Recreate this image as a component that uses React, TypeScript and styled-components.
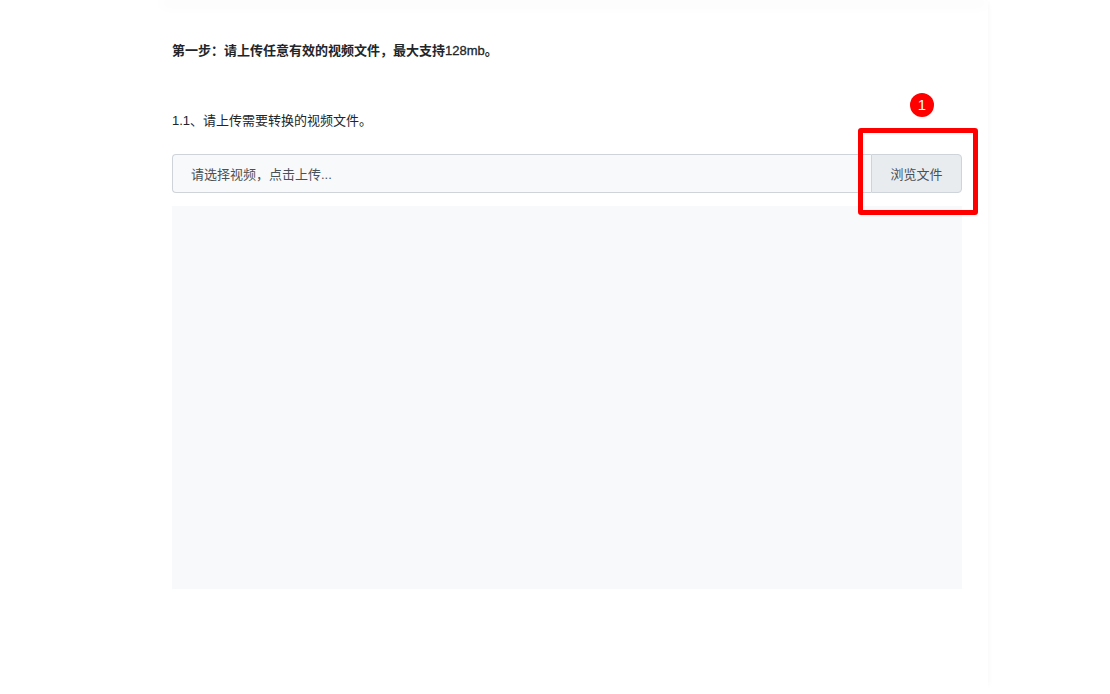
import React from 'react';
import styled, { createGlobalStyle } from 'styled-components';

const GlobalStyle = createGlobalStyle`
  html, body {
    margin: 0;
    padding: 0;
    background: #ffffff;
    font-family: "Liberation Sans", "Noto Sans CJK SC", sans-serif;
    color: #212529;
  }
`;

const Page = styled.div`
  width: 840px;
  margin-left: 148px;
  min-height: 694px;
  position: relative;
  box-shadow: 6px 0 6px -6px rgba(0, 0, 0, 0.04);
`;

const HeaderEdge = styled.div`
  height: 2px;
  margin-left: 12px;
  margin-top: -2px;
  background: #fff;
  box-shadow: 0 4px 14px rgba(0, 0, 0, 0.09);
`;

const Content = styled.div`
  padding: 42px 26px 0 24px;
`;

const StepTitle = styled.div`
  font-size: 13px;
  font-weight: bold;
  line-height: 18px;
`;

const Limit = styled.span`
  font-weight: normal;
  -webkit-text-stroke: 0.3px #212529;
`;

const SubTitle = styled.div`
  margin-top: 52px;
  font-size: 13px;
  line-height: 18px;
`;

const UploadRow = styled.div`
  position: relative;
  margin-top: 24px;
  display: flex;
  height: 39px;
`;

const FileInput = styled.div`
  flex: 1;
  display: flex;
  align-items: center;
  padding-left: 18px;
  background: #f8f9fa;
  border: 1px solid #ced4da;
  border-right: none;
  border-radius: 4px 0 0 4px;
  font-size: 13px;
  color: #495057;
`;

const BrowseButton = styled.div`
  width: 89px;
  display: flex;
  align-items: center;
  justify-content: center;
  background: #e9ecef;
  border: 1px solid #ced4da;
  border-radius: 0 4px 4px 0;
  font-size: 13px;
  color: #495057;
`;

const HighlightBox = styled.div`
  position: absolute;
  left: 686px;
  top: -26px;
  width: 110px;
  height: 77px;
  border: 5px solid #ff0000;
  border-radius: 3px;
`;

const Badge = styled.div`
  position: absolute;
  left: 738px;
  top: -61px;
  width: 24px;
  height: 24px;
  border-radius: 50%;
  background: #ff0000;
  color: #fff;
  font-size: 15px;
  line-height: 24px;
  text-align: center;
`;

const Preview = styled.div`
  margin-top: 13px;
  height: 383px;
  background: #f8f9fa;
`;

export default function App() {
  return (
    <>
      <GlobalStyle />
      <Page>
        <HeaderEdge />
        <Content>
          <StepTitle>
            第一步：请上传任意有效的视频文件，最大支持<Limit>128mb</Limit>。
          </StepTitle>
          <SubTitle>1.1、请上传需要转换的视频文件。</SubTitle>
          <UploadRow>
            <FileInput>请选择视频，点击上传...</FileInput>
            <BrowseButton>浏览文件</BrowseButton>
            <HighlightBox />
            <Badge>1</Badge>
          </UploadRow>
          <Preview />
        </Content>
      </Page>
    </>
  );
}
